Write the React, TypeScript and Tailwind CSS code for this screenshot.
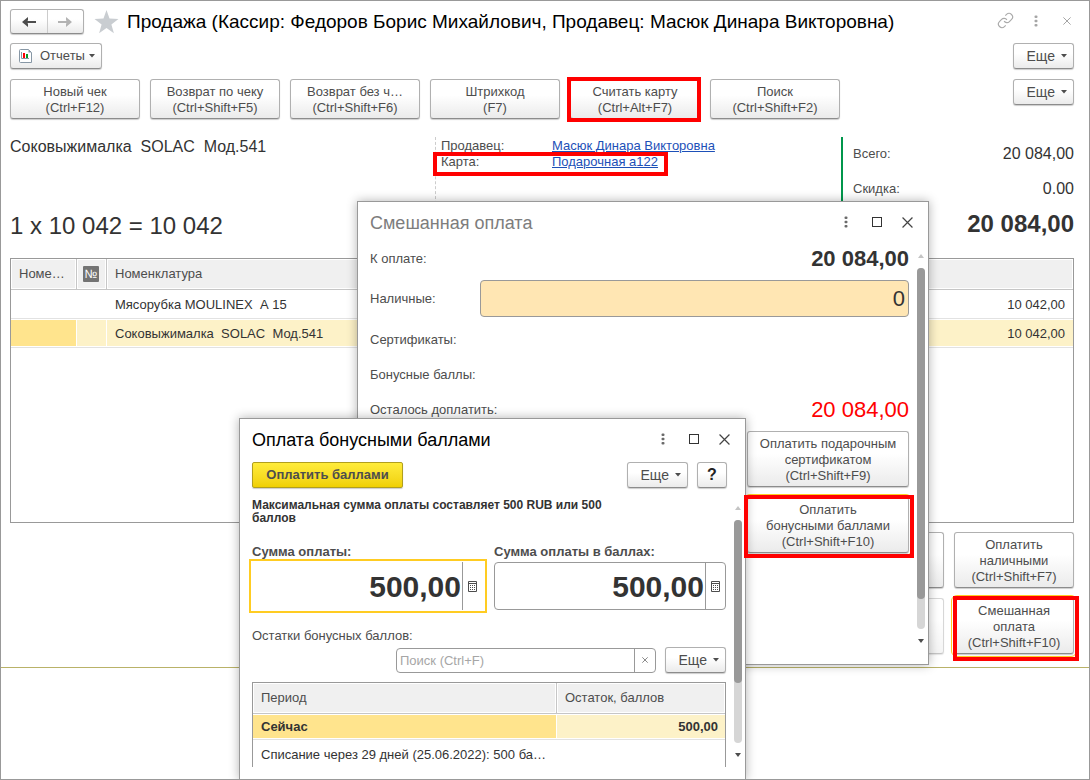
import type { ReactNode } from "react";
import clsx from "clsx";

const BUTTON =
  "rounded-[3px] border border-[#b0b0b0] border-b-[#8c8c8c] bg-linear-to-b from-white from-40% to-[#ebebeb] text-[#4d4d4d] shadow-[0_1px_1px_rgba(0,0,0,0.2)]";

function Caret() {
  return (
    <svg width="6" height="4" viewBox="0 0 6 4" className="shrink-0" aria-hidden="true">
      <path d="M0 0h6L3 3.5z" fill="#4d4d4d" />
    </svg>
  );
}

function MoreButton() {
  return (
    <button className={clsx(BUTTON, "flex h-[26px] w-[61px] items-center justify-end gap-1.5 pr-1.5 text-sm")}>
      Еще
      <Caret />
    </button>
  );
}

function ActionButton({ lines, className }: { lines: string[]; className?: string }) {
  return (
    <button className={clsx(BUTTON, "pt-0.5 text-center text-[13px] leading-4", className)}>
      {lines.map((line) => (
        <span key={line} className="block">
          {line}
        </span>
      ))}
    </button>
  );
}

function Dots({ color }: { color: string }) {
  return (
    <svg width="4" height="12" viewBox="0 0 4 12" aria-hidden="true">
      <g fill={color}>
        <rect x="0.5" y="0.5" width="3" height="2.6" rx="1" />
        <rect x="0.5" y="4.7" width="3" height="2.6" rx="1" />
        <rect x="0.5" y="8.9" width="3" height="2.6" rx="1" />
      </g>
    </svg>
  );
}

function Cross({ size, color }: { size: number; color: string }) {
  return (
    <svg width={size} height={size} viewBox="0 0 10 10" aria-hidden="true">
      <path d="M0.5 0.5l9 9M9.5 0.5l-9 9" stroke={color} strokeWidth="1.1" fill="none" />
    </svg>
  );
}

function Calculator() {
  return (
    <svg width="9" height="11" viewBox="0 0 9 11" aria-hidden="true">
      <path d="M0.5 0.5h8v10h-8zM0.5 2.5h8" stroke="#4d4d4d" fill="none" />
      <g fill="#4d4d4d">
        {[4, 6, 8].map((y) => [2, 4, 6].map((x) => <rect key={`${x}-${y}`} x={x} y={y} width="1" height="1" />))}
      </g>
    </svg>
  );
}

function ScrollBar({ thumb }: { thumb: string }) {
  return (
    <div className="flex w-2 flex-col items-center">
      <svg width="6" height="4" viewBox="0 0 6 4" className="shrink-0" aria-hidden="true">
        <path d="M0 4h6L3 0z" fill="#c4c4c4" />
      </svg>
      <div className="mt-2.5 w-2 flex-1 rounded-full bg-[#d6d6d6]">
        <div className={clsx("w-2 rounded-full bg-[#999]", thumb)} />
      </div>
      <svg width="6" height="4" viewBox="0 0 6 4" className="mt-2.5 shrink-0" aria-hidden="true">
        <path d="M0 0h6L3 4z" fill="#4d4d4d" />
      </svg>
    </div>
  );
}

function DialogHeader({ title, className }: { title: string; className: string }) {
  return (
    <header className="flex h-[42px] items-center justify-between pr-[15px] pl-3">
      <h2 className={clsx("text-lg", className)}>{title}</h2>
      <div className="flex items-center pb-0.5">
        <button className="flex w-4 justify-center">
          <Dots color="#6a6a6a" />
        </button>
        <button className="ml-[18px] block size-[10px] border border-[#333]" />
        <button className="ml-5">
          <Cross size={11} color="#444" />
        </button>
      </div>
    </header>
  );
}

function HeadCell({ children, className }: { children?: ReactNode; className?: string }) {
  return (
    <th className={clsx("border-b border-[#c6c6c6] p-px text-left font-normal not-last:border-r", className)}>
      <div className="flex h-7 items-center bg-[#f0f0f0] px-[7px]">{children}</div>
    </th>
  );
}

function BodyCell({ children, fill, className }: { children?: ReactNode; fill?: string; className?: string }) {
  return (
    <td className="border-b border-[#e2e2e2] py-px not-last:pr-px">
      <div className={clsx("flex h-[26px] items-center px-2 pt-0.5 whitespace-pre", fill, className)}>{children}</div>
    </td>
  );
}

function AmountField({ id, label, focused }: { id: string; label: string; focused?: boolean }) {
  return (
    <div className="flex-1">
      <label htmlFor={id} className="block h-[19px] text-[13px] leading-[18px] font-bold whitespace-nowrap text-[#4d4d4d]">
        {label}
      </label>
      <div
        className={clsx(
          "flex h-12 bg-white",
          focused ? "pr-0.5 outline-2 outline-offset-1 outline-[#fc2]" : "rounded-[4px] border border-[#999]",
        )}
      >
        <input
          id={id}
          defaultValue="500,00"
          className="w-full min-w-0 flex-1 pr-px text-right text-[30px] font-bold text-[#333] outline-none"
        />
        <button className="flex w-5 items-center justify-center border-l border-[#999]">
          <Calculator />
        </button>
      </div>
    </div>
  );
}

function MixedPaymentDialog() {
  return (
    <section className="absolute top-[200px] left-[356px] h-[464px] w-[572px] border border-[#999] bg-white shadow-[0_0_10px_rgba(0,0,0,0.3)]">
      <DialogHeader title="Смешанная оплата" className="text-[#7d7d7d]" />
      <div className="flex h-[399px] justify-between pr-[3px] pl-3 text-[13px] text-[#4d4d4d]">
        <div className="w-[539px]">
          <div className="flex h-[30px] items-center justify-between">
            <span>К оплате:</span>
            <span className="text-[22px] leading-7 font-bold text-[#333]">20 084,00</span>
          </div>
          <div className="mt-1.5 flex h-[37px] items-center">
            <label htmlFor="cash" className="w-[110px]">
              Наличные:
            </label>
            <input
              id="cash"
              defaultValue="0"
              className="h-[37px] flex-1 rounded-[4px] border border-[#999] bg-[#ffe6b3] pr-[3px] text-right text-[22px] text-[#333] outline-none"
            />
          </div>
          <div className="mt-[5px] flex h-[35px] items-center">Сертификаты:</div>
          <div className="flex h-[35px] items-center">Бонусные баллы:</div>
          <div className="flex h-[35px] items-center justify-between">
            <span>Осталось доплатить:</span>
            <span className="text-[22px] leading-8 text-[#f00]">20 084,00</span>
          </div>
          <div className="mt-1 flex flex-col items-end gap-2.5">
            <ActionButton lines={["Оплатить подарочным", "сертификатом", "(Ctrl+Shift+F9)"]} className="h-14 w-[162px]" />
            <ActionButton
              lines={["Оплатить", "бонусными баллами", "(Ctrl+Shift+F10)"]}
              className="h-14 w-[162px] outline outline-offset-2 outline-[#fc2]"
            />
          </div>
        </div>
        <div className="flex pt-2.5">
          <ScrollBar thumb="h-[331px]" />
        </div>
      </div>
    </section>
  );
}

function BonusDialog() {
  return (
    <section className="absolute top-[417px] left-[238px] h-[362px] w-[507px] border border-[#999] bg-white text-[13px] text-[#4d4d4d] shadow-[0_0_10px_rgba(0,0,0,0.3)]">
      <DialogHeader title="Оплата бонусными баллами" className="text-black" />
      <div className="mt-px flex pr-[18px] pl-3">
        <button className="h-[26px] w-[151px] rounded-[2px] border border-[#b19f1e] bg-linear-to-b from-[#ffec3a] to-[#f0d000] text-[13px] font-bold text-[#4d4d4d] shadow-[0_1px_1px_rgba(0,0,0,0.2)]">
          Оплатить баллами
        </button>
        <div className="ml-auto flex gap-[9px]">
          <MoreButton />
          <button className={clsx(BUTTON, "h-[26px] w-[30px] text-base font-bold")}>
            <span className="text-[#222]">?</span>
          </button>
        </div>
      </div>
      <div className="mt-2.5 flex h-[268px] justify-between pr-[3px] pl-3">
        <div className="w-[474px]">
          <p className="w-[370px] pt-px text-xs leading-[13px] font-bold text-[#333]">
            Максимальная сумма оплаты составляет 500 RUB или 500 баллов
          </p>
          <div className="mt-[18px] flex gap-2.5">
            <AmountField id="amount" label="Сумма оплаты:" focused />
            <AmountField id="points" label="Сумма оплаты в баллах:" />
          </div>
          <p className="mt-[17px] h-5 leading-[18px]">Остатки бонусных баллов:</p>
          <div className="flex items-center justify-end gap-[9px]">
            <div className="flex h-[25px] w-[260px] rounded-[4px] border border-[#999]">
              <input
                aria-label="Поиск (Ctrl+F)"
                placeholder="Поиск (Ctrl+F)"
                className="min-w-0 flex-1 pt-0.5 pl-[3px] outline-none placeholder:text-[#a6a6a6]"
              />
              <button className="flex w-[21px] items-center justify-center border-l border-[#999]">
                <Cross size={6} color="#4d4d4d" />
              </button>
            </div>
            <MoreButton />
          </div>
          <div className="mt-[9px] h-[85px] overflow-hidden border border-b-0 border-[#999]">
            <table className="w-full table-fixed border-separate border-spacing-0">
              <thead>
                <tr>
                  <HeadCell className="w-[304px]">Период</HeadCell>
                  <HeadCell>Остаток, баллов</HeadCell>
                </tr>
              </thead>
              <tbody className="text-[#333]">
                <tr>
                  <td className="border-b border-[#e2e2e2] py-px pr-px font-bold">
                    <div className="flex h-[23px] items-center bg-[#ffe48d] px-2">Сейчас</div>
                  </td>
                  <td className="border-b border-[#e2e2e2] py-px font-bold">
                    <div className="flex h-[23px] items-center justify-end bg-[#fdf2c8] px-[7px]">500,00</div>
                  </td>
                </tr>
                <tr>
                  <BodyCell>Списание через 29 дней (25.06.2022): 500 ба…</BodyCell>
                  <BodyCell />
                </tr>
              </tbody>
            </table>
          </div>
        </div>
        <div className="flex pt-2 pb-[9px]">
          <ScrollBar thumb="h-[163px]" />
        </div>
      </div>
    </section>
  );
}

const ACTIONS = [
  ["Новый чек", "(Ctrl+F12)"],
  ["Возврат по чеку", "(Ctrl+Shift+F5)"],
  ["Возврат без ч…", "(Ctrl+Shift+F6)"],
  ["Штрихкод", "(F7)"],
  ["Считать карту", "(Ctrl+Alt+F7)"],
  ["Поиск", "(Ctrl+Shift+F2)"],
];

export default function App() {
  return (
    <div className="relative min-h-screen overflow-hidden border border-[#999] bg-white font-['Liberation_Sans',Arial,sans-serif] text-[13px] text-[#4d4d4d]">
      <main className="border-b border-[#b9b268] pt-2 pr-[15px] pb-[13px] pl-[9px]">
        <header className="flex h-[25px] items-center">
          <div className={clsx(BUTTON, "flex h-[25px] w-[74px]")}>
            <button className="flex flex-1 items-center justify-center border-r border-[#ccc]">
              <svg width="14" height="10" viewBox="0 0 14 10" aria-hidden="true">
                <path d="M6 0v3.6L5 4h9v2H5l1 .4V10L0 5z" fill="#4d4d4d" />
              </svg>
            </button>
            <button className="flex flex-1 items-center justify-center">
              <svg width="14" height="10" viewBox="0 0 14 10" aria-hidden="true">
                <path d="M8 0v3.6L9 4H0v2h9l-1 .4V10l6-5z" fill="#b3b3b3" />
              </svg>
            </button>
          </div>
          <button className="ml-2.5">
            <svg width="25" height="24" viewBox="0 0 24 23" aria-hidden="true">
              <path d="M12 0l2.9 8.2 8.6.3-6.8 5.3 2.4 8.4L12 17.3l-7.1 4.9 2.4-8.4L.5 8.5l8.6-.3z" fill="#c9cdd1" />
            </svg>
          </button>
          <h1 className="ml-2 pt-0.5 text-[19px] whitespace-nowrap text-black">
            Продажа (Кассир: Федоров Борис Михайлович, Продавец: Масюк Динара Викторовна)
          </h1>
          <div className="ml-auto flex items-center pr-[3px] pb-0.5">
            <button>
              <svg width="17" height="17" viewBox="0 0 24 24" fill="none" stroke="#aaa" strokeWidth="1.6" aria-hidden="true">
                <path d="M10 13a5 5 0 0 0 7.54.54l3-3a5 5 0 0 0-7.07-7.07l-1.72 1.71" />
                <path d="M14 11a5 5 0 0 0-7.54-.54l-3 3a5 5 0 0 0 7.07 7.07l1.71-1.71" />
              </svg>
            </button>
            <button className="ml-5">
              <Dots color="#a6a6a6" />
            </button>
            <button className="ml-[25px]">
              <Cross size={8} color="#999" />
            </button>
          </div>
        </header>

        <div className="mt-[9px] flex justify-between">
          <button className={clsx(BUTTON, "flex h-[26px] w-[92px] items-center pl-2")}>
            <svg width="13" height="14" viewBox="0 0 13 14" aria-hidden="true">
              <path d="M1.5.5h8l3 3v10h-11a1 1 0 0 1-1-1v-11a1 1 0 0 1 1-1z" fill="#fff" stroke="#8797a5" />
              <path d="M9.5.5v3h3z" fill="#8797a5" />
              <path d="M2.5 3v6.5H10" stroke="#8797a5" fill="none" />
              <rect x="4" y="4" width="2" height="5" fill="#f00" />
              <rect x="7" y="5" width="2" height="4" fill="#0a9a28" />
            </svg>
            <span className="ml-2">Отчеты</span>
            <span className="ml-1">
              <Caret />
            </span>
          </button>
          <MoreButton />
        </div>

        <div className="mt-2.5 flex items-start gap-2.5">
          {ACTIONS.map((lines) => (
            <div key={lines[0]} className="relative">
              <ActionButton lines={lines} className="h-10 w-[130px]" />
              {lines[0] === "Считать карту" && (
                <span className="pointer-events-none absolute -top-0.5 -right-px -bottom-[3px] -left-[3px] border-4 border-[#f00]" />
              )}
            </div>
          ))}
          <div className="ml-auto">
            <MoreButton />
          </div>
        </div>

        <div className="mt-[18px] flex h-[121px]">
          <div className="w-[425px] text-[#333]">
            <p className="text-base leading-5 whitespace-pre">Соковыжималка{"  "}SOLAC{"  "}Мод.541</p>
            <p className="mt-[53px] text-2xl leading-8">1 x 10 042 = 10 042</p>
          </div>
          <div className="relative flex-1 border-l border-dashed border-[#ccc] pt-px pl-[5px] leading-4">
            <div className="grid grid-cols-[111px_1fr]">
              <span>Продавец:</span>
              <a href="#seller" className="text-[#1d50b8] underline">
                Масюк Динара Викторовна
              </a>
              <span>Карта:</span>
              <a href="#card" className="text-[#1d50b8] underline">
                Подарочная а122
              </a>
            </div>
            <span className="pointer-events-none absolute top-[15px] -left-[3px] h-6 w-[235px] border-4 border-[#f00]" />
          </div>
          <dl className="grid w-[233px] grid-cols-[1fr_auto] grid-rows-[34px_36px_34px] items-center border-l-2 border-[#00964b] pl-2.5">
            <dt>Всего:</dt>
            <dd className="text-base text-[#333]">20 084,00</dd>
            <dt>Скидка:</dt>
            <dd className="text-right text-base text-[#333]">0.00</dd>
            <dd className="col-span-2 text-right text-2xl font-bold text-[#333]">20 084,00</dd>
          </dl>
        </div>

        <div className="h-[265px] border border-[#999]">
          <table className="w-full table-fixed border-separate border-spacing-0">
            <thead>
              <tr>
                <HeadCell className="w-[66px]">Номе…</HeadCell>
                <HeadCell className="w-[30px]">
                  <span className="-mx-0.5 flex size-4 shrink-0 items-center justify-center rounded-[1px] bg-[#737373] text-xs text-white">
                    №
                  </span>
                </HeadCell>
                <HeadCell>Номенклатура</HeadCell>
              </tr>
            </thead>
            <tbody className="text-[#333]">
              <tr>
                <BodyCell />
                <BodyCell />
                <BodyCell className="justify-between">
                  <span>Мясорубка MOULINEX{"  "}А 15</span>
                  <span>10 042,00</span>
                </BodyCell>
              </tr>
              <tr>
                <BodyCell fill="bg-[#ffe48d]" />
                <BodyCell fill="bg-[#fdf2c8]" />
                <BodyCell fill="bg-[#fdf2c8]" className="justify-between">
                  <span>Соковыжималка{"  "}SOLAC{"  "}Мод.541</span>
                  <span>10 042,00</span>
                </BodyCell>
              </tr>
            </tbody>
          </table>
        </div>

        <div className="mt-[9px] grid grid-cols-[120px_120px] justify-end gap-2.5">
          <button className={clsx(BUTTON, "h-14")} />
          <ActionButton lines={["Оплатить", "наличными", "(Ctrl+Shift+F7)"]} className="h-14" />
          <button disabled className={clsx(BUTTON, "h-14 opacity-50")} />
          <div className="relative">
            <ActionButton
              lines={["Смешанная", "оплата", "(Ctrl+Shift+F10)"]}
              className="h-14 w-[120px] outline outline-offset-2 outline-[#fc2]"
            />
            <span className="pointer-events-none absolute -top-0.5 -right-[5px] -bottom-[7px] -left-px border-4 border-[#f00]" />
          </div>
        </div>
      </main>

      <MixedPaymentDialog />
      <BonusDialog />
      <span className="pointer-events-none absolute top-[494px] left-[743px] h-[63px] w-[170px] border-4 border-[#f00]" />
    </div>
  );
}
